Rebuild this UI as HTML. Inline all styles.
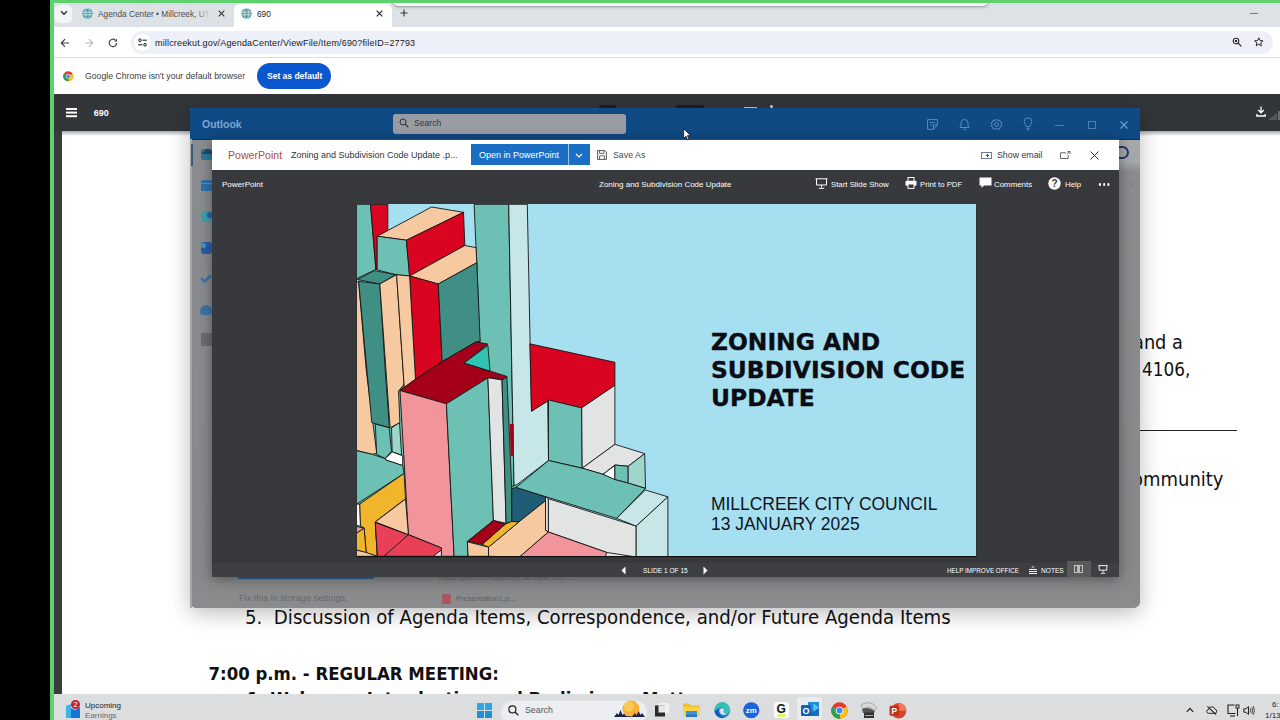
<!DOCTYPE html>
<html><head><meta charset="utf-8"><title>690</title>
<style>
*{box-sizing:border-box;margin:0;padding:0}
html,body{width:1280px;height:720px;overflow:hidden;background:#fff;font-family:"Liberation Sans",sans-serif;}
.a{position:absolute}
#root{position:absolute;left:0;top:0;width:1280px;height:720px;overflow:hidden;background:#fff}
.t{position:absolute;white-space:nowrap;line-height:1;transform-origin:0 50%}
svg{position:absolute;overflow:visible}
.w{color:#fff}
</style></head><body>
<div id="root">
<!-- left black bar + green border -->
<div class="a" style="left:0;top:0;width:50px;height:720px;background:#000"></div>
<div class="a" style="left:50px;top:0;width:3.6px;height:720px;background:#5fd06e"></div>
<div class="a" style="left:50px;top:0;width:1230px;height:3px;background:#5fd06e"></div>

<!-- CHROME TABSTRIP -->
<div id="tabstrip" class="a" style="left:54px;top:3px;width:1226px;height:24px;background:#dde2e6"></div>
<div class="a" style="left:393px;top:-4px;width:595px;height:10px;background:#f4f5f6;border-radius:0 0 5px 5px;box-shadow:0 1px 3px rgba(0,0,0,.35)"></div>
<div class="a" style="left:50px;top:0;width:1230px;height:3px;background:#5fd06e"></div>
<div class="a" style="left:55px;top:5px;width:17px;height:18px;background:#f3f5f8;border-radius:5px"></div>
<svg style="left:60px;top:10px" width="8" height="6" viewBox="0 0 8 6"><path d="M1 1.2 L4 4.2 L7 1.2" fill="none" stroke="#333" stroke-width="1.4"/></svg>
<div class="a" style="left:234px;top:4px;width:158px;height:23px;background:#fff;border-radius:6px 6px 0 0"></div>
<!-- favicons -->
<svg style="left:82px;top:8px" width="11" height="11" viewBox="0 0 11 11"><circle cx="5.5" cy="5.5" r="5.2" fill="#4e9aa6"/><path d="M0.5 4.2h10M0.5 6.8h10" stroke="#d9ecee" stroke-width="0.9"/><ellipse cx="5.5" cy="5.5" rx="2.2" ry="5" fill="none" stroke="#d9ecee" stroke-width="0.7"/></svg>
<svg style="left:241px;top:8px" width="11" height="11" viewBox="0 0 11 11"><circle cx="5.5" cy="5.5" r="5.2" fill="#4e9aa6"/><path d="M0.5 4.2h10M0.5 6.8h10" stroke="#d9ecee" stroke-width="0.9"/><ellipse cx="5.5" cy="5.5" rx="2.2" ry="5" fill="none" stroke="#d9ecee" stroke-width="0.7"/></svg>
<div class="t" style="left:98px;top:9.8px;font-size:8.3px;color:#4a4d51">Agenda Center • Millcreek, UT</div>
<div class="a" style="left:196px;top:6px;width:14px;height:16px;background:linear-gradient(90deg,rgba(221,225,230,0),#dde1e6)"></div>
<div class="t" style="left:257px;top:9.8px;font-size:8.3px;color:#202124">690</div>
<svg style="left:218px;top:10px" width="7" height="7" viewBox="0 0 7 7"><path d="M0.7 0.7L6.3 6.3M6.3 0.7L0.7 6.3" stroke="#333" stroke-width="1.1"/></svg>
<svg style="left:376px;top:10px" width="7" height="7" viewBox="0 0 7 7"><path d="M0.7 0.7L6.3 6.3M6.3 0.7L0.7 6.3" stroke="#222" stroke-width="1.1"/></svg>
<svg style="left:400px;top:9px" width="8" height="8" viewBox="0 0 8 8"><path d="M4 0.5V7.5M0.5 4H7.5" stroke="#333" stroke-width="1.1"/></svg>
<div class="a" style="left:1250px;top:13px;width:8px;height:1px;background:#777"></div>

<!-- TOOLBAR -->
<div class="a" style="left:54px;top:27px;width:1226px;height:31px;background:#fff;border-bottom:1px solid #d9dce1"></div>
<div class="a" style="left:131px;top:31px;width:1142px;height:23px;background:#edf0f8;border-radius:12px"></div>
<svg style="left:60px;top:37.5px" width="10" height="10" viewBox="0 0 10 10"><path d="M9 5H1.5M5 1.2L1.3 5L5 8.8" fill="none" stroke="#3c4043" stroke-width="1.2"/></svg>
<svg style="left:84px;top:37.5px" width="10" height="10" viewBox="0 0 10 10"><path d="M1 5H8.5M5 1.2L8.7 5L5 8.8" fill="none" stroke="#b8bcc2" stroke-width="1.2"/></svg>
<svg style="left:108px;top:37.5px" width="10" height="10" viewBox="0 0 10 10"><path d="M8.6 5A3.7 3.7 0 1 1 7.4 2.2" fill="none" stroke="#3c4043" stroke-width="1.2"/><path d="M9 0.8V3.6H6.2Z" fill="#3c4043"/></svg>
<div class="a" style="left:134px;top:34px;width:17px;height:17px;border-radius:9px;background:#fff"></div>
<svg style="left:138px;top:38px" width="9" height="9" viewBox="0 0 9 9"><circle cx="2" cy="2.2" r="1.3" fill="none" stroke="#222" stroke-width="1"/><path d="M4.6 2.2H8.8" stroke="#222" stroke-width="1.1"/><circle cx="7" cy="6.8" r="1.3" fill="none" stroke="#222" stroke-width="1"/><path d="M0.2 6.8H4.4" stroke="#222" stroke-width="1.1"/></svg>
<div class="t" style="left:155px;top:38.8px;font-size:9px;letter-spacing:.17px;color:#202124">millcreekut.gov/AgendaCenter/ViewFile/Item/690?fileID=27793</div>
<svg style="left:1232px;top:37px" width="10" height="10" viewBox="0 0 10 10"><circle cx="4" cy="4" r="2.8" fill="none" stroke="#222" stroke-width="1.1"/><path d="M6.2 6.2L9.3 9.3" stroke="#222" stroke-width="1.2"/><rect x="3" y="3" width="2" height="2" fill="#222"/></svg>
<svg style="left:1253.5px;top:37px" width="9.6" height="9.6" viewBox="0 0 11 11"><path d="M5.5 0.9L6.9 4.1L10.3 4.4L7.7 6.7L8.5 10.1L5.5 8.3L2.5 10.1L3.3 6.7L0.7 4.4L4.1 4.1Z" fill="none" stroke="#222" stroke-width="1.1" stroke-linejoin="round"/></svg>

<!-- INFOBAR -->
<svg style="left:63px;top:71px" width="10.5" height="10.5" viewBox="0 0 12 12"><circle cx="6" cy="6" r="5.8" fill="#e33b2e"/><path d="M6 6L0.98 3.1A5.8 5.8 0 0 0 6.5 11.78Z" fill="#2ea24c"/><path d="M6 6L6.5 11.78A5.8 5.8 0 0 0 11.02 3.1Z" fill="#fbc116"/><circle cx="6" cy="6" r="2.7" fill="#fff"/><circle cx="6" cy="6" r="2.1" fill="#4285f4"/></svg>
<div class="t" style="left:85px;top:72px;font-size:8.7px;color:#3c4043">Google Chrome isn't your default browser</div>
<div class="a" style="left:257px;top:63px;width:74px;height:26px;background:#0b57d0;border-radius:13px"></div>
<div class="t" style="left:267px;top:72px;font-size:8.5px;color:#fff;font-weight:bold">Set as default</div>

<!-- PDF VIEWER -->
<div class="a" style="left:54px;top:94px;width:1226px;height:37px;background:#323639"></div>
<div class="a" style="left:66px;top:108px;width:11px;height:1.6px;background:#fff;box-shadow:0 3.6px 0 #fff,0 7.2px 0 #fff"></div>
<div class="t" style="left:93.7px;top:109px;font-size:9px;color:#fff;font-weight:bold">690</div>
<svg style="left:1256px;top:106px" width="10" height="11" viewBox="0 0 10 11"><path d="M5 0.5V6.5M2.2 4L5 6.8L7.8 4" fill="none" stroke="#fff" stroke-width="1.3"/><path d="M0.8 8V10H9.2V8" fill="none" stroke="#fff" stroke-width="1.3"/></svg>
<div class="a" style="left:599px;top:104.5px;width:17px;height:3.5px;border-radius:2px;background:#1d1f21"></div>
<div class="a" style="left:676px;top:104.5px;width:28px;height:3.5px;border-radius:2px;background:#1d1f21"></div>
<div class="a" style="left:744px;top:106.5px;width:13px;height:1.5px;background:#c4c6c8"></div>
<div class="a" style="left:770px;top:104.5px;width:3px;height:3px;border-radius:2px;background:#d8d8d8"></div>
<svg style="left:1268px;top:110px" width="12" height="10" viewBox="0 0 12 10"><path d="M0 10L9 3V10Z" fill="#55585b"/><rect x="10" y="1" width="2" height="9" fill="#6a6d70"/></svg>
<div class="a" style="left:54px;top:131px;width:8px;height:563px;background:#393c3f"></div>
<div class="a" style="left:62px;top:131px;width:1218px;height:5px;background:linear-gradient(#aaa,rgba(255,255,255,0))"></div>

<!-- PDF text -->
<div id="pdftext" style="font-family:'DejaVu Sans','Liberation Sans',sans-serif;color:#111">
<div class="t" style="left:1132.5px;top:334px;font-size:18.8px;transform:scaleX(.945)">and a</div>
<div class="t" style="left:1142px;top:361px;font-size:18.8px;transform:scaleX(.9)">4106,</div>
<div class="a" style="left:1140px;top:430px;width:97px;height:1px;background:#222"></div>
<div class="t" style="left:1132px;top:470.5px;font-size:18.8px;transform:scaleX(.957)">ommunity</div>
<div class="t" style="left:245px;top:609px;font-size:18.8px;transform:scaleX(.967);white-space:pre">5.  Discussion of Agenda Items, Correspondence, and/or Future Agenda Items</div>
<div class="t" style="left:208.5px;top:664.5px;font-size:18.4px;font-weight:bold;font-family:'DejaVu Sans Condensed','DejaVu Sans',sans-serif">7:00 p.m. - REGULAR MEETING:</div>
<div class="t" style="left:247px;top:690.3px;font-size:18.4px;font-weight:bold;font-family:'DejaVu Sans Condensed','DejaVu Sans',sans-serif;white-space:pre">1. Welcome, Introduction and Preliminary Matters</div>
</div>

<!-- OUTLOOK WINDOW -->
<div id="outlook" class="a" style="left:190px;top:108px;width:950px;height:500px;background:#8b8c8e;border-radius:2px 2px 7px 7px;box-shadow:0 5px 22px rgba(0,0,0,.27)">
  <div class="a" style="left:0;top:31px;width:950px;height:469px;background:linear-gradient(180deg,#8b8c8f 0%,#87888a 90%,#8a8b8d 100%);border-radius:0 0 7px 7px"></div>
  <div class="a" style="left:0;top:0;width:950px;height:31.5px;background:#104a84;border-bottom:1px solid #0c2f58;border-radius:2px 2px 0 0"></div>
  <div class="t" style="left:12px;top:10.5px;font-size:10.5px;color:#7da5d2;font-weight:bold">Outlook</div>
  <div class="a" style="left:203px;top:5.5px;width:233px;height:20px;background:#999ca3;border-radius:3px"></div>
  <svg style="left:209px;top:10px" width="10" height="10" viewBox="0 0 10 10"><circle cx="4" cy="4" r="3" fill="none" stroke="#2d3238" stroke-width="1"/><path d="M6.2 6.2L9.3 9.3" stroke="#2d3238" stroke-width="1.1"/></svg>
  <div class="t" style="left:224px;top:11px;font-size:8.6px;color:#33373c">Search</div>
  <!-- titlebar icons -->
  <svg style="left:737px;top:11px" width="12" height="11" viewBox="0 0 12 11"><path d="M0.6 0.6H10.4V6L6.5 10.4H0.6Z M6.5 10.4V6H10.4" fill="none" stroke="#5b8cc2" stroke-width="1"/><path d="M3 3.5H8M3 6H5.5" stroke="#5b8cc2" stroke-width=".9"/></svg>
  <svg style="left:769px;top:10px" width="11" height="13" viewBox="0 0 11 13"><path d="M1 9.5V9L2 7.5V5A3.5 3.5 0 0 1 9 5V7.5L10 9V9.5Z" fill="none" stroke="#5b8cc2" stroke-width="1"/><path d="M4 11Q5.5 12.8 7 11" fill="none" stroke="#5b8cc2" stroke-width="1"/></svg>
  <svg style="left:800px;top:10px" width="13" height="13" viewBox="0 0 13 13"><circle cx="6.5" cy="6.5" r="1.9" fill="none" stroke="#5b8cc2" stroke-width="1"/><path d="M6.5 1L7.7 2.6L9.7 2L10.2 4L12 5L11 6.5L12 8L10.2 9L9.7 11L7.7 10.4L6.5 12L5.3 10.4L3.3 11L2.8 9L1 8L2 6.5L1 5L2.8 4L3.3 2L5.3 2.6Z" fill="none" stroke="#5b8cc2" stroke-width="1" stroke-linejoin="round"/></svg>
  <svg style="left:833px;top:9px" width="10" height="14" viewBox="0 0 10 14"><path d="M3.2 9.5C3.2 8 1.2 7 1.2 4.6A3.8 3.8 0 0 1 8.8 4.6C8.8 7 6.8 8 6.8 9.5Z" fill="none" stroke="#5b8cc2" stroke-width="1"/><path d="M3.5 11.3H6.5M4 13H6" stroke="#5b8cc2" stroke-width="1"/></svg>
  <div class="a" style="left:865px;top:17px;width:9px;height:1px;background:#4f7fb3"></div>
  <div class="a" style="left:898px;top:13px;width:8px;height:8px;border:1px solid #4f7fb3"></div>
  <svg style="left:930px;top:13px" width="8" height="8" viewBox="0 0 8 8"><path d="M0.5 0.5L7.5 7.5M7.5 0.5L0.5 7.5" stroke="#6fa0d6" stroke-width="1.1"/></svg>
  <!-- left rail -->
  <div class="a" style="left:0;top:31px;width:1.5px;height:469px;background:#a3a8b0"></div>
  <div class="a" style="left:1px;top:36px;width:2px;height:22px;background:#3c5a7d"></div>
  <div class="a" style="left:10.5px;top:41px;width:11.5px;height:11px;background:#2e7a9c;border-radius:2px"></div>
  <svg style="left:10.5px;top:40px" width="12" height="6" viewBox="0 0 12 6"><path d="M0 6L6 0.5L12 3.5V6Z" fill="#27486e"/></svg>
  <div class="a" style="left:10.5px;top:72px;width:11.5px;height:11px;background:#2f70ab;border-radius:1.5px"></div>
  <div class="a" style="left:10.5px;top:75px;width:11.5px;height:1px;background:#5c8fbd"></div>
  <div class="a" style="left:10.5px;top:103px;width:11.5px;height:11px;background:#3f9fb0;border-radius:3px"></div>
  <div class="a" style="left:17px;top:104px;width:5px;height:6px;background:#2f62a0;border-radius:3px"></div>
  <div class="a" style="left:10.5px;top:134px;width:11.5px;height:12px;background:#2d5da8;border-radius:3px"></div>
  <div class="a" style="left:11px;top:135px;width:4.5px;height:5px;background:#3f9fb0;border-radius:3px"></div>
  <svg style="left:10px;top:166px" width="12" height="9" viewBox="0 0 12 9"><path d="M1 4L4.5 7.5L11 1.5" fill="none" stroke="#3a72a8" stroke-width="2.4"/></svg>
  <div class="a" style="left:10px;top:197px;width:12px;height:10px;background:#3d74a5;border-radius:6px 6px 3px 3px"></div>
  <div class="a" style="left:11px;top:225px;width:11px;height:13px;background:#6b6d71"></div>
  <!-- right peek -->
  <div class="a" style="left:920px;top:32px;width:30px;height:31px;background:linear-gradient(180deg,#a6a7a9 70%,#8c8d90)"></div>
  <div class="a" style="left:924px;top:37.5px;width:14.5px;height:13px;border:2.6px solid #1f3b68;border-radius:7px"></div>
  <svg style="left:938px;top:73px" width="8" height="6" viewBox="0 0 8 6"><path d="M1 1L4 4.5L7 1" fill="none" stroke="#7d7e81" stroke-width="1"/></svg>
  <!-- bottom peek -->
  <div class="a" style="left:48px;top:468px;width:136px;height:3px;background:#2a5f94"></div>
  <div class="t" style="left:49px;top:485.5px;font-size:9.2px;color:#66686b">Fix this in storage settings.</div>
  <div class="t" style="left:247px;top:465px;font-size:9px;color:#6d6e71">Todd Brems Attorney at Law 107...</div>
  <div class="a" style="left:252px;top:486px;width:9px;height:10px;background:#a8565f;border-radius:1.5px"></div>
  <div class="t" style="left:266px;top:487px;font-size:7.6px;color:#5d5e61">Presentation1.p...</div>
</div>

<!-- MODAL -->
<div id="modal" class="a" style="left:212px;top:139px;width:907px;height:438px;background:#38393c;box-shadow:0 2px 12px rgba(0,0,0,.4)">
  <div class="a" style="left:0;top:0;width:907px;height:31px;background:#fff"></div>
  <div class="a" style="left:0;top:0;width:907px;height:1px;background:#1f4f80"></div>
  <div class="t" style="left:16px;top:11px;font-size:10.6px;color:#b44a3a">PowerPoint</div>
  <div class="t" style="left:79px;top:12.2px;font-size:9px;color:#333">Zoning and Subdivision Code Update .p...</div>
  <div class="a" style="left:259px;top:5px;width:118.5px;height:21px;background:#9cc3ea"></div>
  <div class="a" style="left:259px;top:5px;width:97px;height:21px;background:#1a6fc4"></div>
  <div class="a" style="left:357px;top:5px;width:20.5px;height:21px;background:#1a6fc4"></div>
  <div class="t" style="left:267px;top:12.2px;font-size:9px;color:#fff">Open in PowerPoint</div>
  <svg style="left:363px;top:13.5px" width="8" height="6" viewBox="0 0 8 6"><path d="M1 1L4 4L7 1" fill="none" stroke="#fff" stroke-width="1.2"/></svg>
  <svg style="left:385px;top:11px" width="10" height="10" viewBox="0 0 10 10"><path d="M0.6 0.6H8L9.4 2V9.4H0.6Z" fill="none" stroke="#555" stroke-width="1"/><path d="M2.6 0.6V3.4H7V0.6M2.6 9.4V5.8H7.4V9.4" fill="none" stroke="#555" stroke-width=".9"/></svg>
  <div class="t" style="left:401px;top:12.2px;font-size:8.8px;color:#4a4a4a">Save As</div>
  <svg style="left:769px;top:12.5px" width="11" height="7" viewBox="0 0 11 7"><rect x="0.5" y="0.5" width="10" height="6" fill="none" stroke="#5b7590" stroke-width=".9"/><path d="M6.5 1.8V5.2M4.8 3.5H8.2" stroke="#2d5d8c" stroke-width="1.1"/></svg>
  <div class="t" style="left:785px;top:12.2px;font-size:8.8px;color:#3a3a3a">Show email</div>
  <svg style="left:848px;top:11.5px" width="11" height="8" viewBox="0 0 11 8"><path d="M6 1.8H0.5V7.5H8.2V4" fill="none" stroke="#555" stroke-width=".9"/><path d="M7 3L9.8 0.5M7.6 0.5H10V2.8" fill="none" stroke="#555" stroke-width=".9"/></svg>
  <svg style="left:878px;top:11.5px" width="9" height="9" viewBox="0 0 9 9"><path d="M0.5 0.5L8.5 8.5M8.5 0.5L0.5 8.5" stroke="#333" stroke-width="1"/></svg>

  <div class="t w" style="left:10px;top:42px;font-size:8px">PowerPoint</div>
  <div class="t w" style="left:387px;top:42px;font-size:8px">Zoning and Subdivision Code Update</div>
  <svg style="left:603px;top:39px" width="13" height="11" viewBox="0 0 13 11"><path d="M0.5 0.8H12.5M1.5 0.8V7H11.5V0.8M6.5 7V9.5M3.8 10.3H9.2" fill="none" stroke="#fff" stroke-width="1"/></svg>
  <div class="t w" style="left:619px;top:42px;font-size:7.8px">Start Slide Show</div>
  <svg style="left:693px;top:38px" width="12" height="12" viewBox="0 0 12 12"><rect x="3" y="0.5" width="6" height="4" fill="none" stroke="#fff" stroke-width="1"/><rect x="0.5" y="3.8" width="11" height="5" rx="1" fill="#fff"/><rect x="3" y="7" width="6" height="4.4" fill="#38383a" stroke="#fff" stroke-width="1"/></svg>
  <div class="t w" style="left:708px;top:42px;font-size:7.75px">Print to PDF</div>
  <svg style="left:767px;top:38px" width="13" height="12" viewBox="0 0 13 12"><path d="M0.5 0.5H12.5V8.5H5L2.5 11V8.5H0.5Z" fill="#fff"/></svg>
  <div class="t w" style="left:782px;top:42px;font-size:7.9px">Comments</div>
  <svg style="left:836px;top:38px" width="13" height="13" viewBox="0 0 13 13"><circle cx="6.5" cy="6.5" r="6.2" fill="#fff"/><text x="6.5" y="10" font-size="10" font-weight="bold" text-anchor="middle" fill="#38383a" font-family="Liberation Sans,sans-serif">?</text></svg>
  <div class="t w" style="left:853px;top:42px;font-size:7.8px">Help</div>
  <div class="a" style="left:886.5px;top:44px;width:2.6px;height:2.6px;border-radius:2px;background:#fff;box-shadow:4.2px 0 0 #fff,8.4px 0 0 #fff"></div>

  <!-- slide -->
  <div class="a" style="left:0;top:424px;width:907px;height:14px;background:#3e3f42"></div>
  <div id="slide" class="a" style="left:145px;top:65.3px;width:618.8px;height:351.5px;box-shadow:0 1px 1px #111;background:#a6e0f0;overflow:hidden">
<svg class="a" style="left:0;top:0" width="618" height="351" viewBox="357 204 618 351"><g stroke="#151515" stroke-width="0.9" stroke-linejoin="round">
<polygon fill="#6dc0b4" points="357.0,283.0 520.0,283.0 520.0,556.0 357.0,556.0" stroke="none"/>
<polygon fill="#e2e3e3" points="548.4,532.0 636.2,544.4 636.2,557.0 548.4,557.0" stroke="none"/>
<polygon fill="#6dc0b4" points="356.5,204.3 370.5,204.3 375.9,269.4 356.5,278.7"/>
<polygon fill="#d9041f" points="370.5,204.3 387.8,204.3 387.8,230.9 377.2,236.2 377.2,269.4 375.9,269.4"/>
<polygon fill="#6dc0b4" points="474.1,204.3 508.7,204.3 514.0,486.2 499.4,486.2 479.5,339.8 476.8,262.7 476.0,248.1"/>
<polygon fill="#c6e6e8" points="508.7,204.3 527.3,204.3 531.5,410.9 547.7,401.0 548.5,460.5 516.6,484.9 514.0,484.9"/>
<polygon fill="#d9041f" points="529.9,343.8 614.9,362.3 614.9,385.3 581.7,407.9 547.7,401.0 531.5,411.3"/>
<polygon fill="#f6c9a0" points="377.2,236.2 431.6,207.0 463.5,212.3 406.4,240.2"/>
<polygon fill="#6dc0b4" points="377.2,236.2 406.4,240.2 409.6,276.0 395.8,274.7 377.2,269.9"/>
<polygon fill="#d9041f" points="406.4,240.2 463.5,212.3 464.8,245.5 409.6,276.0"/>
<polygon fill="#f6c9a0" points="409.6,276.0 464.8,245.5 476.0,247.6 476.8,262.7 438.3,284.0"/>
<polygon fill="#d9041f" points="409.6,276.0 438.3,284.0 442.2,361.6 415.5,379.2"/>
<polygon fill="#3f8f85" points="438.3,284.0 476.8,262.7 480.2,341.2 475.9,342.0 442.2,361.6"/>
<polygon fill="#3f8f85" points="357.3,279.5 374.5,270.7 395.8,274.7 379.8,284.0"/>
<polygon fill="#f6c9a0" points="356.5,282.7 358.6,281.3 366.2,370.0 376.7,453.0 372.5,454.4 356.3,450.4"/>
<polygon fill="#3f8f85" points="358.6,281.3 379.8,284.0 385.2,370.0 389.4,427.7 371.8,422.7"/>
<polygon fill="#f6c9a0" points="379.8,284.0 396.6,274.7 404.2,386.2 404.8,383.4 398.5,391.1 399.9,422.7 390.1,427.7"/>
<polygon fill="#f6c9a0" points="396.6,274.7 409.6,276.0 415.5,379.2 400.0,390.5 404.2,386.2"/>
<polygon fill="#a40019" points="400.0,390.5 415.5,379.2 442.2,361.6 475.9,342.0 487.9,344.1 464.0,363.0 506.9,376.4 506.2,379.9 487.9,377.8 446.4,403.8"/>
<polygon fill="#2fc4b2" points="464.0,363.0 487.9,345.5 490.0,371.1"/>
<polygon fill="#f2949c" points="400.0,390.5 446.4,403.8 454.1,556.3 441.4,556.3 441.4,547.9 408.4,534.5"/>
<polygon fill="#6dc0b4" points="446.4,403.8 487.9,377.8 493.4,520.5 467.4,541.6 468.1,556.3 454.1,556.3"/>
<polygon fill="#e2e3e3" points="487.9,377.8 502.0,379.9 506.1,523.3 493.4,520.5"/>
<polygon fill="#3f8f85" points="502.0,379.9 506.9,377.1 511.7,488.8 511.7,521.9 506.1,523.3"/>
<polygon fill="#a40019" points="509.9,424.1 513.8,424.1 513.8,455.8 510.6,455.8" stroke="none"/>
<polygon fill="#6dc0b4" points="375.3,424.1 389.1,427.7 391.5,451.1 385.2,458.6 376.7,454.4"/>
<polygon fill="#9fd6cc" points="391.5,427.9 399.5,422.7 401.6,455.1 392.2,451.8"/>
<polygon fill="#ffffff" points="385.2,458.6 392.2,452.0 402.7,455.8 402.7,465.6 385.9,460.0"/>
<polygon fill="#6dc0b4" points="356.3,450.6 372.5,454.4 385.2,458.6 385.9,460.0 402.7,465.6 404.1,473.4 356.3,504.3"/>
<polygon fill="#ffffff" points="356.3,504.3 359.8,504.0 360.5,526.1 356.3,525.4"/>
<polygon fill="#f2949c" points="356.3,526.4 364.1,528.2 356.3,533.4"/>
<polygon fill="#f1b52c" points="359.8,504.0 404.1,473.4 405.5,498.7 375.3,521.9 377.4,556.3 366.2,552.8 364.1,527.8 360.5,526.1"/>
<polygon fill="#f1b52c" points="356.3,533.4 364.1,528.2 366.2,552.8 356.3,550.0"/>
<polygon fill="#f6c9a0" points="356.3,550.0 366.2,552.5 377.4,556.3 356.3,556.3"/>
<polygon fill="#f6c9a0" points="375.3,521.9 405.5,499.1 408.4,534.8"/>
<polygon fill="#e93f57" points="375.3,522.6 408.4,534.8 441.4,547.9 441.4,556.3 377.4,556.3"/>
<polygon fill="#e93f57" points="375.3,522.6 408.4,534.8 383.8,556.3 377.4,556.3"/>
<polygon fill="#e2e3e3" points="433.0,556.3 441.4,550.0 441.4,556.3"/>
<polygon fill="#6dc0b4" points="548.5,399.9 581.7,407.9 582.2,468.2 548.5,460.5"/>
<polygon fill="#e2e3e3" points="581.7,407.9 614.9,385.3 614.9,444.3 582.2,468.2"/>
<polygon fill="#e2e3e3" points="582.2,468.2 614.9,444.3 644.7,453.6 628.2,466.3 614.9,465.0 603.0,474.3"/>
<polygon fill="#ffffff" points="603.0,474.3 614.9,465.5 614.9,480.1"/>
<polygon fill="#6dc0b4" points="614.9,465.0 628.2,466.3 628.2,483.1 614.9,479.6"/>
<polygon fill="#9fd6cc" points="628.2,466.3 644.7,453.6 645.5,488.4 628.2,483.1"/>
<polygon fill="#1e5d75" points="511.7,488.8 515.9,487.4 545.5,496.8 545.5,500.8 518.8,521.9 511.8,521.9"/>
<polygon fill="#6dc0b4" points="516.0,487.4 548.5,460.5 582.2,468.2 603.0,474.3 614.9,479.6 628.2,483.1 645.5,488.4 616.6,518.4 545.5,496.6"/>
<polygon fill="#e2e3e3" points="545.5,496.8 548.4,498.7 548.4,532.0 545.5,530.3"/>
<polygon fill="#e2e3e3" points="548.4,498.7 636.2,526.1 636.2,557.0 606.7,552.4 548.4,532.0"/>
<polygon fill="#c6e6e8" points="616.6,518.4 645.4,490.0 667.9,496.8 636.2,526.1"/>
<polygon fill="#c6e6e8" points="636.2,526.1 667.9,496.8 667.9,557.0 636.2,557.0"/>
<polygon fill="#f6c9a0" points="518.8,521.9 545.5,500.8 545.5,530.3 548.4,532.0 519.5,557.0 488.5,556.3 488.5,547.2"/>
<polygon fill="#f1b52c" points="482.2,544.4 505.4,524.0 511.7,521.5 518.8,521.9 488.5,547.2"/>
<polygon fill="#a40019" points="467.4,541.6 493.4,520.5 505.4,524.0 482.2,544.4"/>
<polygon fill="#f6c9a0" points="467.4,541.8 488.5,547.2 488.5,556.3 468.1,556.3"/>
<polygon fill="#f2949c" points="519.5,557.0 548.4,532.0 606.7,552.4 605.3,557.0"/>
</g></svg>
    <div class="t" style="left:354px;top:123.7px;font-size:23.4px;line-height:28px;font-weight:bold;color:#0c0c14;-webkit-text-stroke:.35px #0c0c14;white-space:pre;font-family:'DejaVu Sans','Liberation Sans',sans-serif">ZONING AND
SUBDIVISION CODE
UPDATE</div>
    <div class="t" style="left:354px;top:289.7px;font-size:17.45px;line-height:20px;color:#10131c;white-space:pre">MILLCREEK CITY COUNCIL
13 JANUARY 2025</div>
  </div>

  <svg style="left:409px;top:427px" width="5" height="9" viewBox="0 0 5 9"><path d="M4.5 0.5V8.5L0.5 4.5Z" fill="#fff"/></svg>
  <div class="t w" style="left:431px;top:429px;font-size:6.6px">SLIDE 1 OF 15</div>
  <svg style="left:491px;top:427px" width="5" height="9" viewBox="0 0 5 9"><path d="M0.5 0.5V8.5L4.5 4.5Z" fill="#fff"/></svg>
  <div class="t w" style="left:735px;top:429px;font-size:6.3px">HELP IMPROVE OFFICE</div>
  <svg style="left:817px;top:427px" width="8" height="9" viewBox="0 0 8 9"><path d="M2.6 1.8L4 0.5L5.4 1.8" fill="none" stroke="#fff" stroke-width=".9"/><path d="M0 3.5H8M0 5.5H8M0 7.5H8" fill="none" stroke="#f0f0f0" stroke-width="1"/></svg>
  <div class="t w" style="left:829px;top:429px;font-size:6.6px">NOTES</div>
  <div class="a" style="left:854.5px;top:421.5px;width:24px;height:16.5px;background:#5a5a5d"></div>
  <svg style="left:862px;top:426px" width="9" height="8" viewBox="0 0 10 9"><rect x="0.5" y="0.5" width="3.6" height="8" fill="none" stroke="#ddd" stroke-width=".9"/><rect x="5.9" y="0.5" width="3.6" height="8" fill="none" stroke="#ddd" stroke-width=".9"/><path d="M5 0V9" stroke="#ddd" stroke-width=".8"/></svg>
  <svg style="left:886px;top:426px" width="10" height="9" viewBox="0 0 10 9"><path d="M0.3 0.6H9.7M1.2 0.6V5.2H8.8V0.6M5 5.2V7.4M2.8 8.3H7.2" fill="none" stroke="#fff" stroke-width=".9"/></svg>
</div>

<!-- cursor -->
<svg style="left:683.3px;top:128.3px" width="8.7" height="13" viewBox="0 0 10 15"><path d="M0.7 0.8V12L3.4 9.5L5.3 13.8L7 13L5.1 8.8H8.8Z" fill="#fff" stroke="#111" stroke-width=".9" stroke-linejoin="round"/></svg>

<!-- TASKBAR -->
<div id="taskbar" class="a" style="left:54px;top:694px;width:1226px;height:26px;background:#dcdddf"></div>
<!-- widgets -->
<svg style="left:65px;top:700px" width="16" height="19" viewBox="0 0 16 19"><path d="M1 6L6 4V18H1Z" fill="#39b6e8"/><path d="M6 8L10 10L15 7V18H6Z" fill="#1a74d8"/><circle cx="10.5" cy="4.5" r="4.5" fill="#c4202f"/><text x="10.5" y="7.2" font-size="7.5" fill="#fff" text-anchor="middle" font-family="Liberation Sans,sans-serif">2</text></svg>
<div class="t" style="left:85px;top:701.5px;font-size:8px;color:#1c1c1c">Upcoming</div>
<div class="t" style="left:85px;top:712px;font-size:8px;color:#666">Earnings</div>
<!-- start -->
<svg style="left:477px;top:703px" width="15" height="15" viewBox="0 0 15 15"><rect x="0" y="0" width="7" height="7" fill="#2aa7e6"/><rect x="8" y="0" width="7" height="7" fill="#2aa7e6"/><rect x="0" y="8" width="7" height="7" fill="#1e90d8"/><rect x="8" y="8" width="7" height="7" fill="#1e90d8"/></svg>
<!-- search pill -->
<div class="a" style="left:501px;top:700.5px;width:146px;height:23px;background:#eceef1;border-radius:11.5px"></div>
<svg style="left:508px;top:705px" width="11" height="11" viewBox="0 0 11 11"><circle cx="4.4" cy="4.4" r="3.5" fill="none" stroke="#222" stroke-width="1.2"/><path d="M7 7L10.3 10.3" stroke="#222" stroke-width="1.4"/></svg>
<div class="t" style="left:525px;top:706px;font-size:8.8px;color:#555">Search</div>
<svg style="left:614px;top:700px" width="32" height="18" viewBox="0 0 32 18"><circle cx="17" cy="9" r="8.5" fill="#f9b233"/><circle cx="15" cy="6.5" r="5" fill="#fbd36b" opacity=".7"/><path d="M0 17L3 13L4.5 15L6.5 10L8.5 15L10 13.5L12 16L18 16.5L21 13L22.5 15.5L24.5 11L26.5 15L28 13L31 17Z" fill="#1d2350"/></svg>
<!-- task view -->
<svg style="left:655px;top:703px" width="14" height="14" viewBox="0 0 14 14"><rect x="3" y="0" width="11" height="10" fill="#f0f0f0"/><rect x="0" y="2.5" width="10" height="11" fill="#2a2a2a"/><rect x="3.5" y="2.5" width="6.5" height="7" fill="#e8e8e8"/></svg>
<!-- explorer -->
<svg style="left:683px;top:702px" width="17" height="16" viewBox="0 0 17 16"><path d="M0 1.5H6L8 3.5H17V14H0Z" fill="#f4c22f"/><rect x="0" y="5" width="17" height="9" fill="#fbd34a"/><rect x="3" y="9" width="11" height="5" fill="#3b93d8"/><rect x="3" y="12.5" width="11" height="2.5" fill="#2a78c0"/></svg>
<!-- edge -->
<svg style="left:714px;top:702px" width="16.5" height="16.5" viewBox="0 0 18 18"><circle cx="9" cy="9" r="8.6" fill="#1b7fd6"/><path d="M9 .4A8.6 8.6 0 0 1 17.6 9C17.6 11 16 12.5 14 12.5C11 12.5 10.5 10.5 11.5 9.2C12 8.2 11 5.8 8.5 5.8C5 5.8 2.5 8.5 .6 10.5A8.6 8.6 0 0 1 9 .4Z" fill="#35c3b0"/><path d="M5.6 9.5C5 13 7.5 16.5 11.5 17.2A8.6 8.6 0 0 1 .8 11C2 8 4.5 7 5.6 9.5Z" fill="#1459b3"/><path d="M8.6 6.8C6.8 6.8 5.6 8.2 5.8 10.2C6 12.4 8 14.2 10.6 14.2C12.6 14.2 14 13.4 14.8 12.4C13 13 10.8 12.4 10.6 10.4C10.6 9.4 11.4 9 11.2 8.2C11 7.4 10 6.8 8.6 6.8Z" fill="#dcdddf"/></svg>
<!-- zoom -->
<svg style="left:743.3px;top:701.7px" width="16.5" height="16.5" viewBox="0 0 19 19"><circle cx="9.5" cy="9.5" r="9.3" fill="#1d63dc"/><text x="9.5" y="12.6" font-size="9" font-weight="bold" fill="#fff" text-anchor="middle" font-family="Liberation Sans,sans-serif">zm</text></svg>
<!-- G -->
<div class="a" style="left:773.5px;top:702px;width:15.5px;height:16px;background:#fafbf7;border-radius:3px"></div>
<div class="a" style="left:776.5px;top:714.3px;width:9.5px;height:2.6px;background:#e3f26a;border-radius:2px"></div>
<div class="t" style="left:776.6px;top:703.3px;font-size:12px;font-weight:bold;color:#111">G</div>
<!-- outlook -->
<div class="a" style="left:797px;top:697px;width:25px;height:23px;background:#e9ebee;border-radius:3px"></div>
<svg style="left:800px;top:701px" width="20" height="18" viewBox="0 0 20 18"><path d="M8 1H19V7L13.5 3Z" fill="#35a5e6"/><rect x="8" y="1" width="11" height="14" rx="1" fill="#1f8ad8"/><path d="M8 7L13.5 11L19 7V15H8Z" fill="#176cc0"/><path d="M13.5 2.5L19 6.5L13.5 10.5Z" fill="#5cc2f2"/><rect x="1" y="4" width="10" height="11" rx="1.2" fill="#0f62b4"/><text x="6" y="13" font-size="9" font-weight="bold" fill="#fff" text-anchor="middle" font-family="Liberation Sans,sans-serif">O</text></svg>
<!-- chrome -->
<svg style="left:831px;top:701.5px" width="17" height="17" viewBox="0 0 12 12"><circle cx="6" cy="6" r="5.8" fill="#e33b2e"/><path d="M6 6L0.98 3.1A5.8 5.8 0 0 0 6.5 11.78Z" fill="#2ea24c"/><path d="M6 6L6.5 11.78A5.8 5.8 0 0 0 11.02 3.1Z" fill="#fbc116"/><circle cx="6" cy="6" r="2.7" fill="#fff"/><circle cx="6" cy="6" r="2.1" fill="#4285f4"/></svg>
<!-- scanner -->
<svg style="left:859px;top:701px" width="20" height="18" viewBox="0 0 20 18"><path d="M2 4Q8 0 14 3L18 7L16 9Q9 4 4 8Z" fill="#d9d9d9" stroke="#888" stroke-width=".6"/><path d="M3 8Q9 5 16 10L15 12H4Z" fill="#555"/><rect x="5" y="11.5" width="10" height="5.5" fill="#333"/><path d="M6 14.5H14" stroke="#ccc" stroke-width=".8"/></svg>
<!-- powerpoint -->
<svg style="left:889px;top:701.5px" width="17.5" height="17.5" viewBox="0 0 19 19"><circle cx="10.5" cy="9.5" r="8.3" fill="#d9452b"/><path d="M10.5 1.2A8.3 8.3 0 0 1 18.8 9.5H10.5Z" fill="#f0785a"/><rect x="0.6" y="4.2" width="10.4" height="10.6" rx="1.2" fill="#c2311f"/><text x="5.8" y="13" font-size="9" font-weight="bold" fill="#fff" text-anchor="middle" font-family="Liberation Sans,sans-serif">P</text></svg>
<!-- tray -->
<svg style="left:1186px;top:707px" width="8" height="6" viewBox="0 0 8 6"><path d="M0.8 4.8L4 1.4L7.2 4.8" fill="none" stroke="#222" stroke-width="1.2"/></svg>
<svg style="left:1206px;top:705px" width="11.5" height="10.5" viewBox="0 0 13 12"><path d="M3 9.5Q0.8 9.5 0.8 7.2Q0.8 5.2 3 5Q3.6 2 6.5 2Q9.2 2 10 4.6Q12.2 5 12.2 7.2Q12.2 9.5 10 9.5Z" fill="none" stroke="#222" stroke-width="1.1"/><path d="M1.5 1.5L11.5 11" stroke="#222" stroke-width="1.2"/></svg>
<svg style="left:1227px;top:704px" width="13" height="13" viewBox="0 0 13 13"><path d="M7.5 1H1V9.5H8.5" fill="none" stroke="#222" stroke-width="1.1"/><path d="M3 12H8" stroke="#222" stroke-width="1.1"/><rect x="9" y="1" width="3" height="3" fill="none" stroke="#222" stroke-width="1"/><path d="M10.5 4V12" stroke="#222" stroke-width="1.1"/></svg>
<svg style="left:1243px;top:705px" width="12" height="11" viewBox="0 0 12 11"><path d="M0.8 3.8H3L5.5 1.5V9.5L3 7.2H0.8Z" fill="none" stroke="#222" stroke-width="1"/><path d="M7.2 3.4Q8.2 5.5 7.2 7.6M8.8 2.2Q10.4 5.5 8.8 8.8M10.3 1.2Q12.4 5.5 10.3 9.8" fill="none" stroke="#222" stroke-width=".8"/></svg>
<div class="t" style="left:1272px;top:701px;font-size:8px;color:#222">6:</div>
<div class="t" style="left:1265px;top:712px;font-size:8px;color:#222">1/13</div>

</div>
</body></html>
